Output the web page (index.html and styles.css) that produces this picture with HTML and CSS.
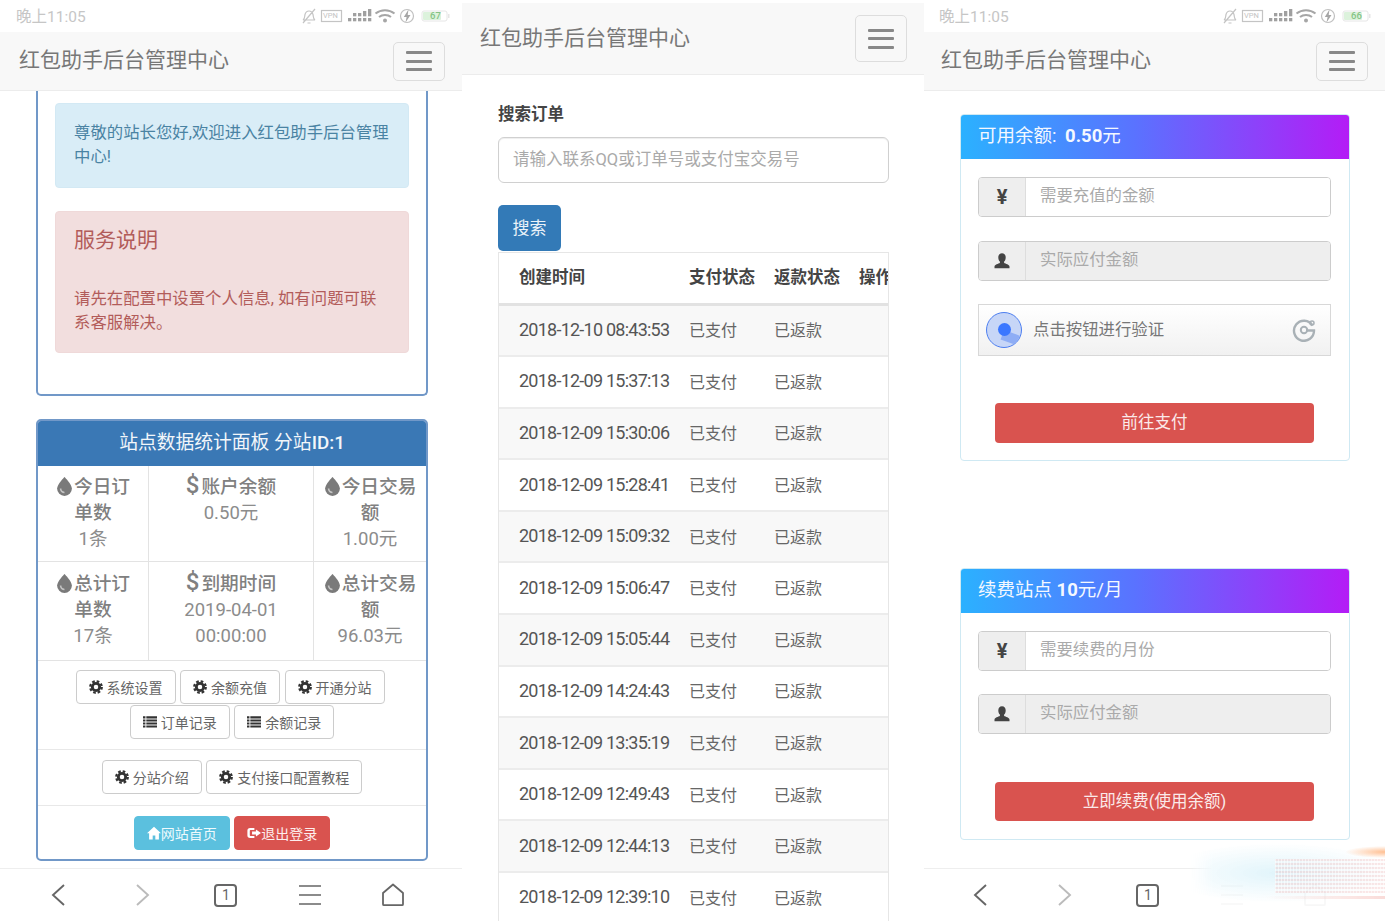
FILE: index.html
```html
<!DOCTYPE html>
<html lang="zh-CN">
<head>
<meta charset="utf-8">
<title>红包助手后台管理中心</title>
<link rel="stylesheet" href="styles.css">
</head>
<body>
<svg class="defs" width="0" height="0" aria-hidden="true">
  <symbol id="i-gear" viewBox="0 0 16 16">
    <circle cx="8" cy="8" r="4.2" fill="none" stroke="currentColor" stroke-width="3.2"/>
    <circle cx="8" cy="8" r="6.6" fill="none" stroke="currentColor" stroke-width="2.6" stroke-dasharray="3 2.18"/>
  </symbol>
  <symbol id="i-list" viewBox="0 0 16 16">
    <path fill="currentColor" d="M0 1.500h2.800v2.400H0zM3.800 1.500H16v2.400H3.800zM0 5h2.800v2.400H0zM3.800 5H16v2.400H3.800zM0 8.500h2.800v2.400H0zM3.800 8.500H16v2.400H3.800zM0 12h2.800v2.400H0zM3.800 12H16v2.400H3.800z"/>
  </symbol>
  <symbol id="i-tint" viewBox="0 0 16 18">
    <path fill="currentColor" d="M8 0C8 0 1 7 1 11a7 7 0 0 0 14 0C15 7 8 0 8 0z"/>
    <path fill="#fff" opacity=".55" d="M3.500 11a4.500 4.500 0 0 0 4.500 4.500v-1.600a2.900 2.900 0 0 1-2.900-2.900z"/>
  </symbol>
  <symbol id="i-home" viewBox="0 0 16 16">
    <path fill="currentColor" d="M8 .8 0 8.200h2.400V15.500h4.100v-4.700h3v4.700h4.100V8.200H16z"/>
  </symbol>
  <symbol id="i-out" viewBox="0 0 18 16">
    <path fill="currentColor" d="M4 1.500h5.500v2.600H4.600a1 1 0 0 0-1 1v5.800a1 1 0 0 0 1 1h4.900v2.600H4a3.500 3.500 0 0 1-3.500-3.500V5A3.500 3.500 0 0 1 4 1.500z"/>
    <path fill="currentColor" d="M11.500 3.500 18 8l-6.500 4.500V10H6.500V6h5z"/>
  </symbol>
  <symbol id="i-user" viewBox="0 0 18 18">
    <path fill="currentColor" d="M9 1.200c2.400 0 3.700 1.800 3.700 4.200 0 1.700-.7 3.300-1.600 4.200v1.400c1.600.7 5.200 1.500 5.400 3.600v1.600H1.500V14.600c.2-2.100 3.800-2.900 5.400-3.600V9.600C6 8.700 5.300 7.100 5.300 5.400 5.300 3 6.600 1.200 9 1.200z"/>
  </symbol>
  <symbol id="i-back" viewBox="0 0 24 24"><path fill="none" stroke="currentColor" stroke-width="1.9" d="M17 2 6 12l11 10"/></symbol>
  <symbol id="i-fwd" viewBox="0 0 24 24"><path fill="none" stroke="currentColor" stroke-width="1.9" d="M7 2l11 10L7 22"/></symbol>
  <symbol id="i-menu" viewBox="0 0 24 24"><path fill="none" stroke="currentColor" stroke-width="1.7" d="M1 3h22M1 12h22M1 21h22"/></symbol>
  <symbol id="i-house" viewBox="0 0 24 24"><path fill="none" stroke="currentColor" stroke-width="1.8" stroke-linejoin="round" d="M12 1.500 2 10v11.200a1 1 0 0 0 1 1h18a1 1 0 0 0 1-1V10z"/></symbol>
  <symbol id="i-status" viewBox="0 0 150 16">
    <g fill="none" stroke="#c4c4c4" stroke-width="1.200">
      <path d="M2 12c2-1 1.500-3.500 2-5.500.6-2.300 2.200-3.500 4-3.500s3.400 1.200 4 3.500c.5 2 0 4.500 2 5.500zM2 15 14 1M6.500 15h3"/>
      <rect x="20.500" y="2.500" width="20" height="11"/>
    </g>
    <g fill="#a0a0a0">
      <rect x="47" y="10" width="3.300" height="3.300"/><rect x="52" y="10" width="3.300" height="3.300"/><rect x="57" y="10" width="3.300" height="3.300"/><rect x="62" y="10" width="3.300" height="3.300"/><rect x="67" y="10" width="3.300" height="3.300"/>
      <rect x="52" y="5" width="3.300" height="3.300"/><rect x="57" y="5" width="3.300" height="3.300"/><rect x="62" y="3" width="3.300" height="5.300"/><rect x="67" y="1" width="3.300" height="7.300"/>
    </g>
    <g fill="none" stroke="#a6a6a6" stroke-width="2"><path d="M74.500 5.500c5.500-4.500 13.500-4.500 19 0M78 9c3.200-2.700 8.800-2.700 12 0"/></g>
    <circle cx="84" cy="12.500" r="2" fill="#a6a6a6"/>
    <circle cx="106" cy="8" r="6.500" fill="none" stroke="#c0c0c0" stroke-width="1.200"/>
    <path fill="#a6a6a6" d="M107.500 1.500 102.800 9h2.800L104.500 14.500 109.500 7h-2.800z"/>
    <rect x="121" y="3" width="25" height="10" rx="2" fill="#fff" stroke="#e6e6e6"/>
    <rect x="122" y="4" width="18" height="8" rx="1" fill="#dcf2dc"/>
    <rect x="147" y="6" width="1.500" height="4" fill="#e6e6e6"/>
  </symbol>
</svg>

<main class="screens">
  <!-- left screen -->
  <section class="phone">
    <div class="status"><span class="time">晚上11:05</span><span class="status-icons"><svg class="status-svg"><use href="#i-status"/></svg><span class="vpn">VPN</span><b class="batt">67</b></span></div>
    <header class="nav"><span class="brand">红包助手后台管理中心</span><button class="toggle" aria-label="menu"><i></i><i></i><i></i></button></header>
    <div class="scroll">
      <div class="card card-cut">
        <div class="alert alert-info">尊敬的站长您好,欢迎进入红包助手后台管理中心!</div>
        <div class="alert alert-danger">
          <h4>服务说明</h4>
          <p>请先在配置中设置个人信息, 如有问题可联系客服解决。</p>
        </div>
      </div>
      <div class="card card-stats">
        <div class="card-title">站点数据统计面板 分站<b>ID:1</b></div>
        <div class="stats">
          <div class="stat"><strong><svg class="ic-tint"><use href="#i-tint"/></svg>今日订<br>单数</strong><span>1条</span></div>
          <div class="stat"><strong><em>$</em>账户余额</strong><span>0.50元</span></div>
          <div class="stat"><strong><svg class="ic-tint"><use href="#i-tint"/></svg>今日交易<br>额</strong><span>1.00元</span></div>
          <div class="stat"><strong><svg class="ic-tint"><use href="#i-tint"/></svg>总计订<br>单数</strong><span>17条</span></div>
          <div class="stat"><strong><em>$</em>到期时间</strong><span>2019-04-01<br>00:00:00</span></div>
          <div class="stat"><strong><svg class="ic-tint"><use href="#i-tint"/></svg>总计交易<br>额</strong><span>96.03元</span></div>
        </div>
        <div class="btns">
          <a class="btn"><svg class="ic"><use href="#i-gear"/></svg>系统设置</a>
          <a class="btn"><svg class="ic"><use href="#i-gear"/></svg>余额充值</a>
          <a class="btn btn-end"><svg class="ic"><use href="#i-gear"/></svg>开通分站</a>
          <a class="btn"><svg class="ic"><use href="#i-list"/></svg>订单记录</a>
          <a class="btn"><svg class="ic"><use href="#i-list"/></svg>余额记录</a>
        </div>
        <div class="btns btns-2">
          <a class="btn"><svg class="ic"><use href="#i-gear"/></svg>分站介绍</a>
          <a class="btn"><svg class="ic"><use href="#i-gear"/></svg>支付接口配置教程</a>
        </div>
        <div class="btns btns-3">
          <a class="btn btn-info"><svg class="ic ic-tight"><use href="#i-home"/></svg>网站首页</a>
          <a class="btn btn-red"><svg class="ic ic-tight"><use href="#i-out"/></svg>退出登录</a>
        </div>
      </div>
    </div>
    <footer class="bar">
      <svg class="b-ic dark"><use href="#i-back"/></svg>
      <svg class="b-ic light"><use href="#i-fwd"/></svg>
      <span class="tab">1</span>
      <svg class="b-ic dark"><use href="#i-menu"/></svg>
      <svg class="b-ic dark"><use href="#i-house"/></svg>
    </footer>
  </section>

  <!-- middle screen -->
  <section class="phone phone-mid">
    <header class="nav nav-mid"><span class="brand">红包助手后台管理中心</span><button class="toggle toggle-mid" aria-label="menu"><i></i><i></i><i></i></button></header>
    <div class="search">
      <label class="lbl" for="q">搜索订单</label>
      <input class="q" id="q" placeholder="请输入联系QQ或订单号或支付宝交易号">
      <button class="btn-search">搜索</button>
      <div class="tbl-wrap">
        <table class="tbl">
          <thead><tr><th>创建时间</th><th>支付状态</th><th>返款状态</th><th>操作</th></tr></thead>
          <tbody>
            <tr><td>2018-12-10 08:43:53</td><td>已支付</td><td>已返款</td><td></td></tr>
            <tr><td>2018-12-09 15:37:13</td><td>已支付</td><td>已返款</td><td></td></tr>
            <tr><td>2018-12-09 15:30:06</td><td>已支付</td><td>已返款</td><td></td></tr>
            <tr><td>2018-12-09 15:28:41</td><td>已支付</td><td>已返款</td><td></td></tr>
            <tr><td>2018-12-09 15:09:32</td><td>已支付</td><td>已返款</td><td></td></tr>
            <tr><td>2018-12-09 15:06:47</td><td>已支付</td><td>已返款</td><td></td></tr>
            <tr><td>2018-12-09 15:05:44</td><td>已支付</td><td>已返款</td><td></td></tr>
            <tr><td>2018-12-09 14:24:43</td><td>已支付</td><td>已返款</td><td></td></tr>
            <tr><td>2018-12-09 13:35:19</td><td>已支付</td><td>已返款</td><td></td></tr>
            <tr><td>2018-12-09 12:49:43</td><td>已支付</td><td>已返款</td><td></td></tr>
            <tr><td>2018-12-09 12:44:13</td><td>已支付</td><td>已返款</td><td></td></tr>
            <tr><td>2018-12-09 12:39:10</td><td>已支付</td><td>已返款</td><td></td></tr>
          </tbody>
        </table>
      </div>
    </div>
  </section>

  <!-- right screen -->
  <section class="phone phone-right">
    <div class="status"><span class="time">晚上11:05</span><span class="status-icons"><svg class="status-svg"><use href="#i-status"/></svg><span class="vpn">VPN</span><b class="batt">66</b></span></div>
    <header class="nav"><span class="brand">红包助手后台管理中心</span><button class="toggle" aria-label="menu"><i></i><i></i><i></i></button></header>
    <div class="scroll scroll-right">
      <div class="pay">
        <div class="pay-title">可用余额: <b>0.50</b>元</div>
        <div class="pay-body">
          <div class="group"><span class="addon yen">¥</span><input class="field" placeholder="需要充值的金额"></div>
          <div class="group"><span class="addon"><svg class="ic-user"><use href="#i-user"/></svg></span><input class="field" disabled placeholder="实际应付金额"></div>
          <div class="captcha">
            <span class="radar"><span class="radar-wedge"></span><span class="radar-dot"></span></span>
            <span class="captcha-text">点击按钮进行验证</span>
            <svg class="refresh" viewBox="0 0 24 24"><path fill="none" stroke="#a9b1b6" stroke-width="2.400" d="M20.500 7.500A10 10 0 1 0 22 12.500H14"/><circle cx="12" cy="12" r="3.200" fill="none" stroke="#a9b1b6" stroke-width="2"/><circle cx="20" cy="5" r="2" fill="none" stroke="#a9b1b6" stroke-width="1.500"/></svg>
          </div>
          <button class="submit">前往支付</button>
        </div>
      </div>
      <div class="pay pay-2">
        <div class="pay-title">续费站点 <b>10</b>元/月</div>
        <div class="pay-body">
          <div class="group group-tight"><span class="addon yen">¥</span><input class="field" placeholder="需要续费的月份"></div>
          <div class="group"><span class="addon"><svg class="ic-user"><use href="#i-user"/></svg></span><input class="field" disabled placeholder="实际应付金额"></div>
          <button class="submit submit-2">立即续费(使用余额)</button>
        </div>
      </div>
    </div>
    <footer class="bar bar-right">
      <svg class="b-ic dark"><use href="#i-back"/></svg>
      <svg class="b-ic light"><use href="#i-fwd"/></svg>
      <span class="tab">1</span>
      <svg class="b-ic dark"><use href="#i-menu"/></svg>
      <svg class="b-ic dark"><use href="#i-house"/></svg>
    </footer>
    <div class="watermark"></div>
  </section>
</main>
</body>
</html>
```
FILE: styles.css
```css
* { box-sizing: border-box; }
html, body { margin: 0; padding: 0; background: #fff; }
body {
  width: 1385px;
  height: 921px;
  overflow: hidden;
  font-family: Roboto, "Noto Sans CJK SC", sans-serif;
  color: #555;
}
.defs { position: absolute; }
.screens { display: grid; grid-template-columns: 462px 462px 461px; height: 921px; }
.phone { position: relative; display: flex; flex-direction: column; height: 921px; overflow: hidden; background: #fff; }

/* status bar */
.status { height: 32px; display: flex; align-items: center; justify-content: space-between; padding: 0 11px 2px 16px; flex: none; }
.phone-right .status { padding: 0 13px 2px 15px; }
.time { font-size: 15.500px; color: #c6c6c6; }
.status-icons { position: relative; display: block; width: 150px; height: 16px; top: 1px; }
.status-svg { display: block; width: 150px; height: 16px; }
.vpn { position: absolute; left: 22px; top: 3px; font-size: 7.500px; line-height: 10px; color: #c4c4c4; }
.batt { position: absolute; left: 129px; top: 3px; font-size: 9.500px; line-height: 10px; font-weight: 500; color: #85c285; }

/* navbar */
.nav { height: 59px; flex: none; display: flex; align-items: center; justify-content: space-between; padding: 0 17px 0 19px; background: #f8f8f8; border-bottom: 1px solid #ececec; }
.phone-right .nav { padding-left: 17px; }
.brand { font-size: 21px; line-height: 1; color: #777; padding-bottom: 2px; }
.toggle { width: 52px; height: 39px; padding: 0; background: transparent; border: 1px solid #ddd; border-radius: 5px; display: flex; flex-direction: column; align-items: center; justify-content: center; gap: 5.500px; }
.toggle i { display: block; width: 26px; height: 3px; background: #888; border-radius: 1px; }
.nav-mid { height: 72px; margin-top: 3px; padding: 0 17px 0 18px; }
.nav-mid .brand { padding-bottom: 0; }
.toggle-mid { width: 52px; height: 47px; }

/* left content */
.scroll { flex: 1; min-height: 0; overflow: hidden; padding: 0 34px 0 36px; }
.card { border: 2px solid #7198c8; border-radius: 5px; background: #fff; }
.card-cut { border-top: 0; border-radius: 0 0 5px 5px; height: 305px; padding: 12px 17px 0 17px; }
.alert { border-radius: 4px; padding: 17px 10px 17px 18px; font-size: 16.400px; line-height: 24px; }
.alert-info { background: #d9edf7; color: #4a83a3; height: 85px; border: 1px solid #d3e9f4; }
.alert-danger { background: #f2dede; color: #b25c5a; height: 142px; margin-top: 23px; padding-right: 26px; border: 1px solid #efd9d9; }
.alert h4 { margin: 0; font-size: 21px; line-height: 22px; font-weight: 400; }
.alert p { margin: 36px 0 0; }
.card-stats { margin-top: 23px; height: 442px; overflow: hidden; }
.card-title { height: 45px; background: #3a78b5; color: #f2f6fa; text-align: center; font-size: 18.800px; line-height: 44px; }
.card-title b { font-weight: 500; }
.stats { display: grid; grid-template-columns: 111px 165px 1fr; grid-template-rows: 96px 98px; border-bottom: 1px solid #e3e3e3; height: 195px; }
.stat { padding: 8px 2px 0; text-align: center; font-size: 18.700px; line-height: 26px; color: #888; border-right: 1px solid #e3e3e3; border-bottom: 1px solid #e3e3e3; }
.stat:nth-child(3n) { border-right: 0; }
.stat:nth-child(n+4) { border-bottom: 0; padding-top: 9px; }
.stat strong { display: block; font-weight: 500; color: #808080; }
.stat span { display: block; font-size: 18.500px; font-weight: 400; color: #8c8c8c; }
.stat em { font-style: normal; font-size: 24px; line-height: 0; font-weight: 500; margin-right: 2px; }
.ic-tint { width: 17px; height: 19px; color: #7a7a7a; vertical-align: -3px; margin-right: 1px; }
.btns { display: flex; flex-wrap: wrap; justify-content: center; gap: 1px 4.500px; padding: 9px 30px 10px; border-bottom: 1px solid #e8e8e8; }
.btn-end { margin-right: 4px; }
.btns-2 { padding: 10px 20px; height: 56px; }
.btns-3 { padding: 10px 20px 0; border-bottom: 0; }
.btn { display: inline-flex; align-items: center; height: 34px; padding: 0 12px 1px; background: #fff; border: 1px solid #ccc; border-radius: 4px; font-size: 14px; color: #666; white-space: nowrap; }
.ic { width: 14px; height: 14px; margin-right: 4px; color: #333; }
.ic-tight { margin-right: 0; color: #fff; }
.btn-info { background: #5bc0de; border-color: #5bc0de; color: #eefafd; }
.btn-red { background: #d9534f; border-color: #d9534f; color: #fdeeee; }

/* bottom bar */
.bar { height: 53px; flex: none; display: grid; grid-template-columns: repeat(5, 83.600px); padding-left: 17px; justify-items: center; align-items: center; border-top: 1px solid #eee; background: #fff; }
.bar-right { padding-left: 15px; }
.b-ic { width: 24px; height: 24px; }
.dark { color: #666; }
.light { color: #bbb; }
.tab { width: 23px; height: 23px; border: 2px solid #666; border-radius: 4px; font-size: 14px; line-height: 19px; text-align: center; color: #666; }

/* middle */
.phone-mid { background: #fff; }
.search { flex: 1; min-height: 0; padding: 28px 35px 0 36px; display: flex; flex-direction: column; align-items: flex-start; }
.lbl { font-size: 16.500px; line-height: 24px; font-weight: 700; color: #444; }
.q { width: 100%; height: 46px; margin-top: 10px; padding: 0 14px 2px; border: 1.500px solid #d0d0d0; border-radius: 6px; font-family: inherit; font-size: 16.500px; color: #555; background: #fff; box-shadow: inset 0 1px 1px rgba(0,0,0,.07); flex: none; }
.q::placeholder, .field::placeholder { color: #aaa; opacity: 1; }
.btn-search { width: 63px; height: 46px; flex: none; margin-top: 22px; background: #337ab7; border: 0; border-radius: 5px; color: #eaf2f9; font-family: inherit; font-size: 17px; padding: 0 0 3px; }
.tbl-wrap { width: 100%; flex: 1; min-height: 0; margin-top: 1px; overflow: hidden; border-left: 1px solid #e6e6e6; border-right: 1px solid #e6e6e6; border-top: 1px solid #e6e6e6; }
.tbl { table-layout: fixed; width: 425px; border-collapse: separate; border-spacing: 0; }
.tbl th, .tbl td { width: 85px; padding: 0 0 2px 20px; text-align: left; white-space: nowrap; }
.tbl th:nth-child(1), .tbl td:nth-child(1) { width: 170px; }
.tbl th { height: 52.500px; padding-bottom: 4px; border-bottom: 3px solid #e2e2e2; font-size: 16.500px; font-weight: 700; color: #444; }
.tbl td { height: 51.600px; border-bottom: 2px solid #ececec; font-size: 16px; color: #666; }
.tbl td:first-child { font-size: 18px; letter-spacing: -.76px; color: #555; }
.tbl tbody tr:nth-child(odd) td { background: #f8f8f8; }

/* right */
.scroll-right { padding: 23px 35px 0 36px; }
.pay { border: 1px solid #cfe9f3; border-radius: 4px; height: 347px; background: #fff; }
.pay-2 { height: 272px; margin-top: 107px; }
.pay-title { height: 44px; border-radius: 3px 3px 0 0; background: linear-gradient(to right, #2bb1ff, #5a72ff 45%, #b41cf6); color: #f4f8ff; font-size: 18.500px; line-height: 43px; padding-left: 17px; }
.pay-title b { font-weight: 700; margin-left: 4px; }
.pay-2 .pay-title b { margin-left: 0; }
.pay-body { padding: 18px 18px 0 17px; }
.group { display: flex; height: 40px; margin-bottom: 24px; border: 1px solid #ccc; border-radius: 4px; overflow: hidden; }
.group-tight { margin-bottom: 23px; }
.addon { width: 47px; flex: none; display: flex; align-items: center; justify-content: center; background: #eee; border-right: 1px solid #ddd; color: #444; }
.yen { font-size: 20px; font-weight: 700; }
.ic-user { width: 18px; height: 18px; color: #444; }
.field { flex: 1; min-width: 0; border: 0; padding: 0 14px 3px; font-family: inherit; font-size: 16.400px; background: #fff; }
.field:disabled { background: #eee; }
.captcha { display: flex; align-items: center; height: 52px; margin-top: -1px; padding: 0 14px 1px 7px; border: 1px solid #d8d8d8; background: linear-gradient(#fff, #f1f1f1); }
.radar { position: relative; width: 36px; height: 36px; border-radius: 50%; background: #c7d6f7; border: 1px solid #4e7ff0; display: block; flex: none; overflow: hidden; }
.radar-wedge { position: absolute; left: 17px; top: 17px; width: 18px; height: 10px; background: #8eadf5; transform: rotate(20deg); transform-origin: 0 0; }
.radar-dot { position: absolute; left: 10.500px; top: 10.500px; width: 13px; height: 13px; border-radius: 50%; background: #3b77ff; }
.captcha-text { flex: 1; margin-left: 11px; padding-bottom: 4px; font-size: 16.400px; color: #777; }
.refresh { width: 24px; height: 24px; }
.submit { display: block; width: 319px; height: 40px; margin: 47px 0 0 17px; background: #d9534f; border: 0; border-radius: 4px; color: #fbeaea; font-family: inherit; font-size: 16.500px; padding: 0 0 4px; }
.submit-2 { margin-top: 48px; height: 39px; }
.watermark {
  position: absolute;
  right: 0;
  bottom: 0;
  width: 196px;
  height: 78px;
  pointer-events: none;
  background:
    repeating-linear-gradient(to right, rgba(255,255,255,.55) 0 1px, rgba(255,255,255,0) 1px 3px) 100% 16px / 110px 34px no-repeat,
    radial-gradient(ellipse 40px 6px at 100% 9px, rgba(255,170,110,.75), rgba(255,190,140,0)),
    repeating-linear-gradient(to bottom, rgba(236,160,160,.26) 0 2px, rgba(255,235,235,.12) 2px 4px) 100% 16px / 110px 34px no-repeat,
    linear-gradient(to left, rgba(245,190,185,.55), rgba(245,200,200,0)) 100% 53px / 120px 3px no-repeat,
    radial-gradient(ellipse 120px 30px at 45% 30px, rgba(212,240,249,.7), rgba(225,245,250,0)),
    rgba(255,255,255,.95);
  -webkit-mask-image: linear-gradient(to right, transparent, #000 12%);
  mask-image: linear-gradient(to right, transparent, #000 12%);
}
```
